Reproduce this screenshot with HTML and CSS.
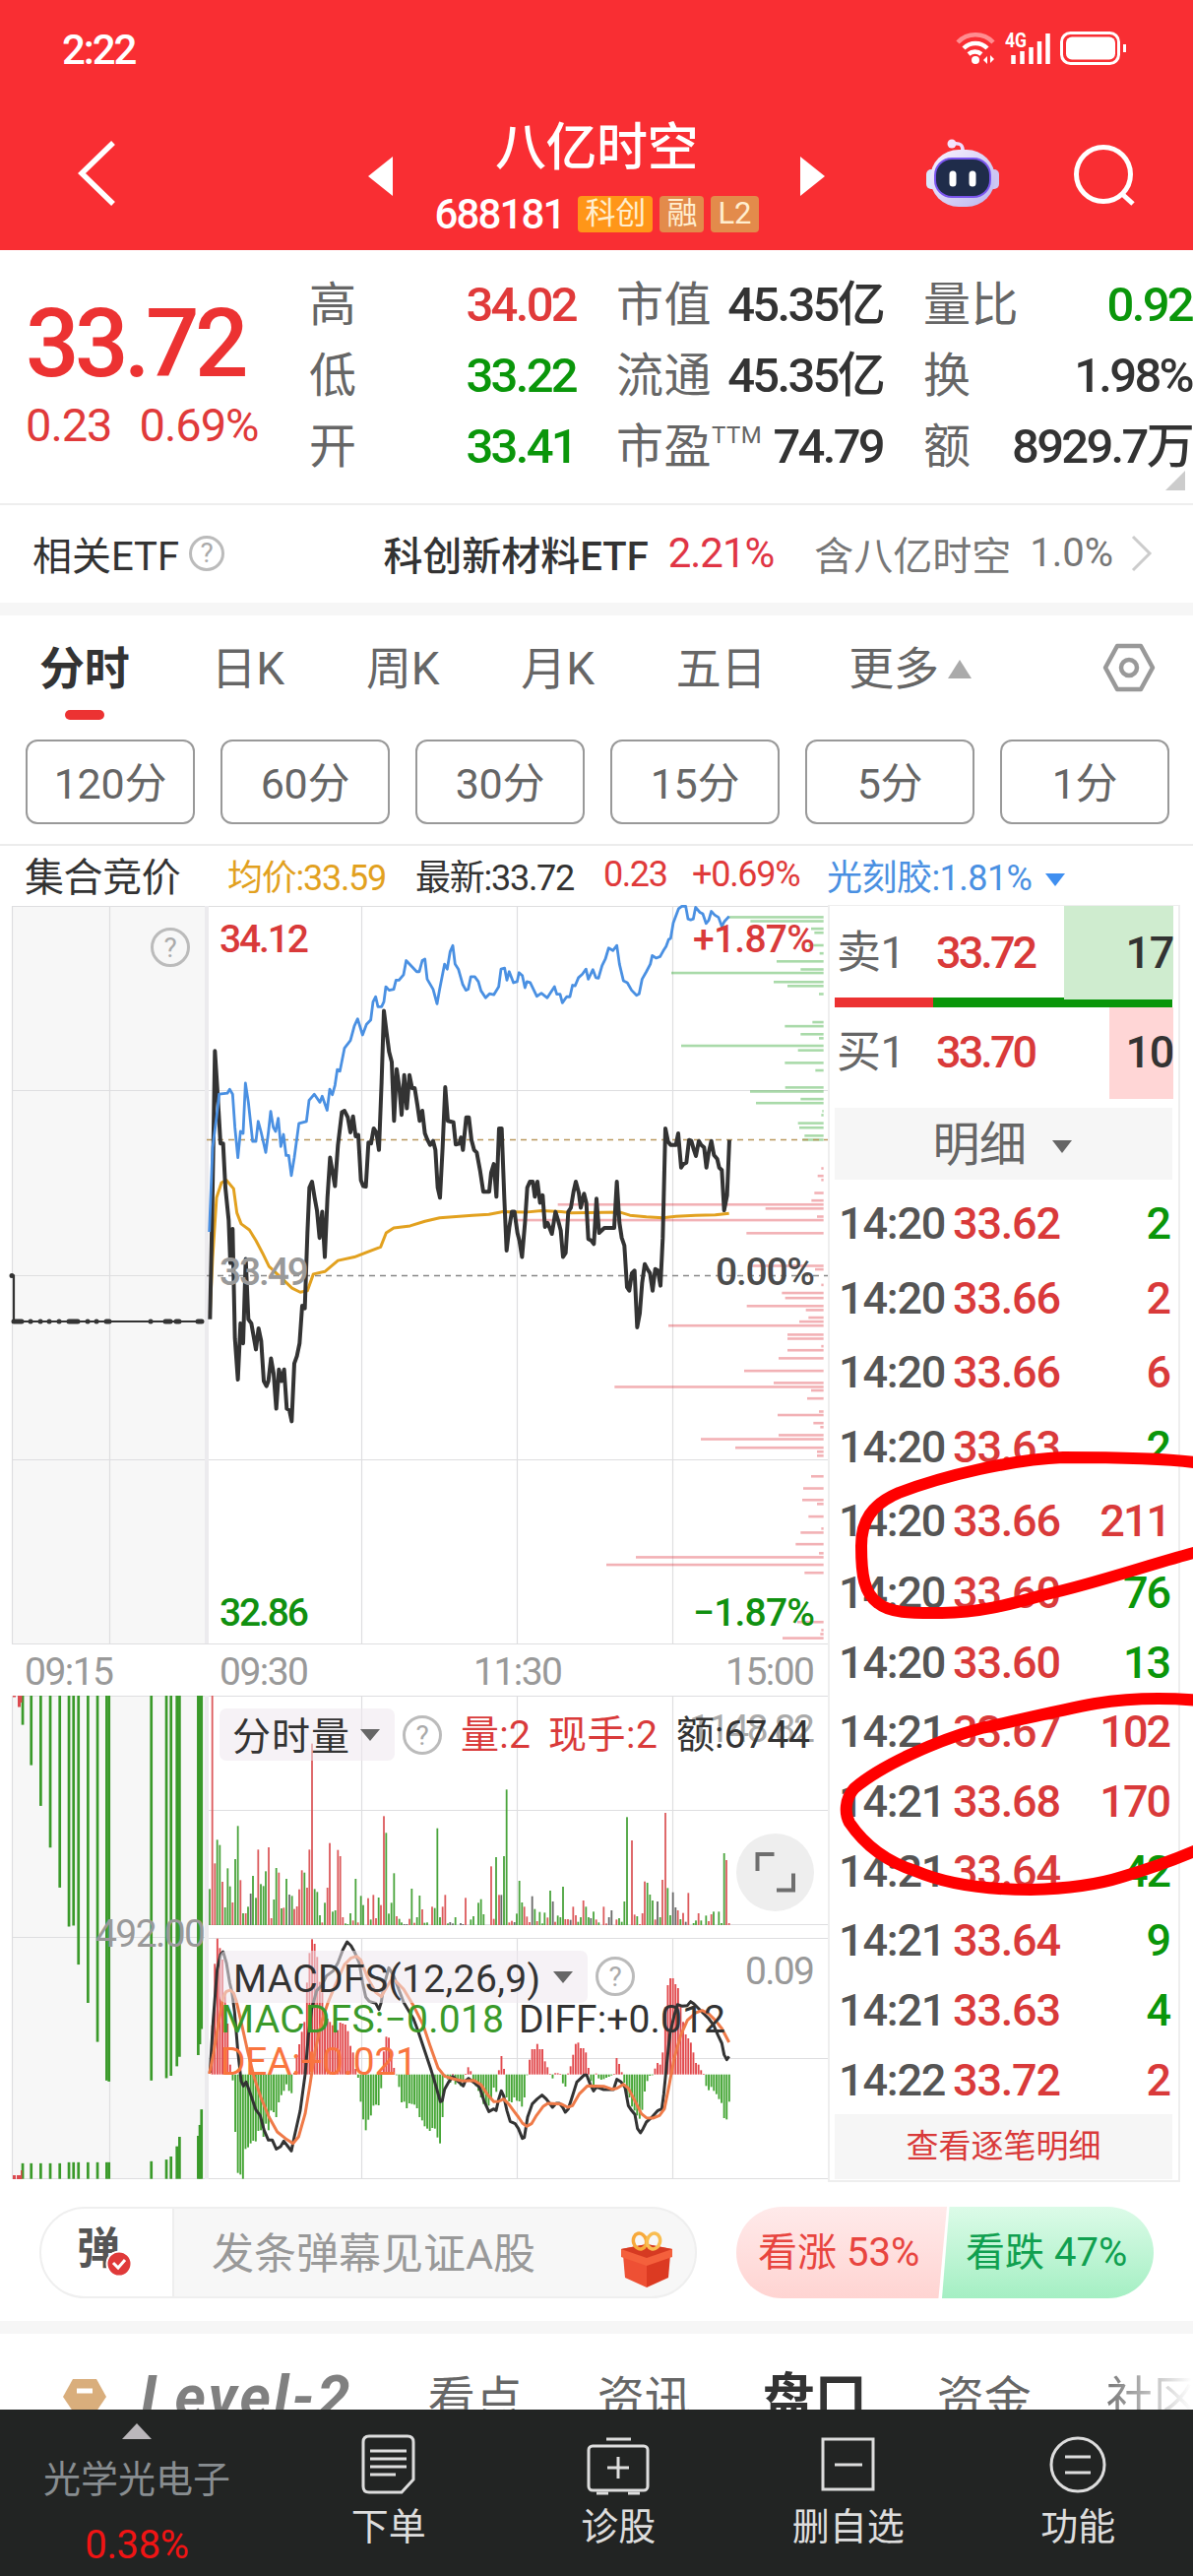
FILE: index.html
```html
<!DOCTYPE html>
<html lang="zh-CN">
<head>
    <meta charset="UTF-8">
    <meta name="viewport" content="width=device-width, initial-scale=1.0">
    <title>八亿时空 688181</title>
    <link rel="stylesheet" href="styles.css">
</head>
<body>
<div class="screen">
    <header class="header">
        <div class="status">
            <span>2:22</span>
            <svg width="180" height="40" viewBox="968 30 180 40" fill="none" stroke="#fff" stroke-width="4.5">
                <path d="M973 43a25 25 0 0 1 36 0" stroke="#ff8d90"/>
                <path d="M979 49a17 17 0 0 1 24 0"/>
                <path d="M984 55a10 10 0 0 1 13 0"/>
                <circle cx="991" cy="61" r="4" fill="#fff" stroke="none"/>
                <path d="M1003 57v8l-4-4zM1006 64v-8l4 4z" fill="#fff" stroke="none"/>
                <text x="1021" y="48" class="net" textLength="22" lengthAdjust="spacingAndGlyphs">4G</text>
                <path d="M1029.500 65v-9M1038.500 65v-13M1047.500 65v-17M1056 65v-23M1064.500 65v-31"/>
                <rect x="1078.500" y="33.500" width="58" height="31" rx="9" stroke-width="3"/>
                <rect x="1083" y="37.500" width="50" height="23" rx="6" fill="#fff" stroke="none"/>
                <path d="M1142.500 45v8" stroke-width="3"/>
            </svg>
        </div>
        <div class="titlebar">
            <svg class="back" width="42" height="72" viewBox="0 0 42 72"><path d="M37 5L5 36L37 67" fill="none" stroke="#fff" stroke-width="5.500"/></svg>
            <svg class="prev" width="26" height="40" viewBox="0 0 26 40"><path d="M25 0v40L0 20z" fill="#fff"/></svg>
            <div class="stock">
                <h1>八亿时空</h1>
                <div class="code"><span>688181</span><b class="tag hot">科创</b><b class="tag">融</b><b class="tag">L2</b></div>
            </div>
            <svg class="next" width="26" height="40" viewBox="0 0 26 40"><path d="M1 0v40L26 20z" fill="#fff"/></svg>
            <svg class="robot" width="76" height="72" viewBox="0 0 76 72">
                <defs>
                    <linearGradient id="shell" x1="0" y1="0" x2="1" y2="1"><stop offset="0" stop-color="#fbf4ff"/><stop offset="1" stop-color="#b9b4ee"/></linearGradient>
                </defs>
                <path d="M38 14Q39 4 28 6" fill="none" stroke="#f0dcff" stroke-width="3.500"/>
                <circle cx="27" cy="6" r="4.500" fill="#f4e4ff"/>
                <rect x="1" y="32" width="12" height="20" rx="5" fill="#d9e8fb"/>
                <rect x="63" y="32" width="12" height="20" rx="5" fill="#cdc6f2"/>
                <rect x="5" y="12" width="66" height="58" rx="29" fill="url(#shell)"/>
                <rect x="9" y="20" width="58" height="41" rx="18" fill="#7a55ee"/>
                <rect x="11" y="22" width="54" height="37" rx="16" fill="#1f2c4a"/>
                <path d="M28 37v9M48 37v9" stroke="#fff" stroke-width="7" stroke-linecap="round"/>
            </svg>
            <svg class="search" width="68" height="68" viewBox="0 0 68 68" fill="none" stroke="#fff" stroke-width="5"><circle cx="32" cy="31" r="27.500"/><path d="M51 51l11 10"/></svg>
        </div>
    </header>

    <section class="quote">
        <div class="price red">
            <div class="last">33.72</div>
            <div class="chg"><span>0.23</span><span>0.69%</span></div>
        </div>
        <dl>
            <dt>高</dt><dd class="red">34.02</dd>
            <dt>低</dt><dd class="green">33.22</dd>
            <dt>开</dt><dd class="green">33.41</dd>
        </dl>
        <dl>
            <dt>市值</dt><dd>45.35亿</dd>
            <dt>流通</dt><dd>45.35亿</dd>
            <dt>市盈<sup>TTM</sup></dt><dd>74.79</dd>
        </dl>
        <dl class="wide">
            <dt>量比</dt><dd class="green">0.92</dd>
            <dt>换</dt><dd>1.98%</dd>
            <dt>额</dt><dd>8929.7万</dd>
        </dl>
        <i class="corner"></i>
    </section>

    <section class="etf">
        <span>相关ETF</span>
        <svg class="help" width="36" height="36" viewBox="0 0 36 36"><circle cx="18" cy="18" r="16.500"/><text x="18" y="27">?</text></svg>
        <span class="etf-name">科创新材料ETF</span>
        <span class="etf-pct">2.21%</span>
        <span class="muted etf-in">含八亿时空</span>
        <span class="muted etf-w">1.0%</span>
        <svg width="24" height="38" viewBox="0 0 24 38"><path d="M3 2L20 19L3 36" fill="none" stroke="#ccc" stroke-width="3"/></svg>
    </section>

    <nav class="tabs">
        <span class="on">分时</span><span>日K</span><span>周K</span><span>月K</span><span>五日</span>
        <span>更多<i class="up"></i></span>
        <svg width="54" height="50" viewBox="0 0 54 50" fill="none" stroke="#999" stroke-width="4.500"><path d="M15 3h24l12 22l-12 22h-24l-12-22z" stroke-linejoin="round"/><circle cx="27" cy="25" r="8"/></svg>
    </nav>

    <div class="periods">
        <button>120分</button><button>60分</button><button>30分</button><button>15分</button><button>5分</button><button>1分</button>
    </div>

    <div class="info">
        <span class="call">集合竞价</span>
        <span class="avg">均价:33.59</span>
        <span class="new">最新:33.72</span>
        <span class="red d1">0.23</span>
        <span class="red d2">+0.69%</span>
        <span class="board">光刻胶:1.81%<i class="down"></i></span>
    </div>

    <main class="market">
        <svg class="chart" width="842" height="1297" viewBox="0 919 842 1297">
            <!-- call auction background and grid -->
            <path d="M12 920h198v749h-198zM12 1722h198v491h-198z" fill="#f7f7f7"/>
            <path class="grid" d="M12 920.500H842M12 1107.500H842M12 1482.500H842M12 1669.500H842M12 1295.500H210M12.500 920V1669M111.500 920V1669M367.500 920V1669M525.500 920V1669M683.500 920V1669M12 1722.500H842M12 1967.500H210M12 2212.500H842M12.500 1722V2213M111.500 1722V2213M210 1838.500H842M210 1954.500H842M210 1968.500H842M210 2090.500H842M367.500 1722V1955M525.500 1722V1955M683.500 1722V1955M367.500 1968V2213M525.500 1968V2213M683.500 1968V2213"/>
            <path d="M210 920V1669M210 1722V2213" stroke="#ecebee" stroke-width="4"/>
            <g id="levels" opacity=".36"></g>
            <path d="M210 1157.500H842" stroke="#b9975c" stroke-width="1.300" stroke-dasharray="6 5"/>
            <path d="M210 1295.500H842" stroke="#888" stroke-width="1.300" stroke-dasharray="6 5"/>

            <!-- auction price -->
            <path d="M12 1295.500h2V1342H206" fill="none" stroke="#333" stroke-width="2.200"/>
            <path d="M12 1295.500h.1M14 1342h8M31 1342h.1M41 1342h.1M50 1342h.1M60 1342h.1M70 1342h9M89 1342h.1M98 1342h.1M108 1342h3M153 1342h.1M168 1342h5M179 1342h3M201 1342h4" stroke="#333" stroke-width="5" stroke-linecap="round"/>

            <g transform="translate(0 900) scale(.33333 .5102)" fill="none" stroke-linejoin="round">
                <polyline class="line" stroke="#e2a11f" stroke-width="3" points="640,850 648,740 660,620 675,590 690,585 712,602 722,650 735,672 760,684 780,705 800,730 820,757 850,775 890,800 915,808 937,805 955,772 990,767 1030,745 1080,738 1160,718 1177,690 1200,680 1250,676 1295,667 1340,660 1380,658 1440,655 1490,653 1530,648 1600,649 1650,646 1710,648 1740,650 1890,649 1920,655 1970,658 2020,660 2060,657 2120,655 2180,654 2222,651"/>
                <polyline class="line" stroke="#333" stroke-width="4" points="640,862 647,640 655,328 662,400 672,512 680,512 687,600 697,665 702,750 709,682 716,900 725,982 733,870 741,910 749,742 757,862 766,870 780,922 788,880 796,905 804,985 812,995 818,985 826,940 834,970 842,1040 850,962 858,985 866,962 874,1040 882,1043 889,1065 897,950 905,935 913,910 921,835 929,840 937,690 943,600 951,588 959,620 966,645 974,700 982,648 990,738 998,620 1006,540 1014,570 1021,597 1030,515 1042,450 1050,447 1060,460 1068,490 1076,458 1084,498 1092,495 1100,585 1107,597 1115,598 1123,510 1131,512 1139,482 1147,490 1155,525 1163,390 1170,248 1178,290 1186,330 1194,350 1201,467 1209,364 1217,400 1224,455 1232,376 1240,442 1248,376 1256,402 1264,402 1272,435 1279,467 1287,447 1295,492 1303,505 1311,515 1320,507 1327,525 1334,600 1341,620 1349,520 1357,400 1365,467 1382,470 1389,514 1400,512 1405,500 1411,525 1421,460 1429,460 1437,505 1445,525 1453,530 1463,565 1473,608 1491,608 1497,570 1505,553 1513,618 1521,482 1529,482 1537,620 1544,725 1552,680 1560,648 1568,648 1577,690 1583,705 1591,738 1600,670 1607,600 1615,588 1624,588 1630,618 1638,588 1646,630 1654,615 1661,678 1669,670 1682,692 1693,648 1701,665 1709,685 1716,738 1724,730 1732,648 1740,640 1748,608 1755,588 1764,610 1770,640 1780,612 1787,630 1793,702 1802,705 1810,712 1818,622 1826,690 1842,680 1872,680 1880,588 1888,670 1895,700 1903,715 1911,798 1918,805 1926,770 1934,765 1942,878 1950,850 1957,790 1965,752 1973,762 1981,770 1989,805 1997,762 2005,765 2013,795 2020,700 2028,482 2036,508 2044,515 2060,515 2067,492 2076,560 2083,553 2092,550 2100,505 2107,507 2115,525 2121,537 2130,507 2137,515 2146,520 2153,560 2160,530 2168,507 2176,535 2186,543 2192,560 2200,565 2207,645 2216,615 2223,505"/>
                <polyline class="line" stroke="#4a90e2" stroke-width="2.800" points="638,688 648,520 660,460 668,414 693,412 700,404 709,414 716,480 725,540 733,488 741,492 748,392 757,430 770,508 780,508 787,468 796,490 810,530 818,490 825,448 833,480 840,488 848,462 856,518 864,494 872,536 880,536 888,576 897,540 911,472 934,468 942,426 958,414 975,430 982,418 997,446 1005,404 1013,415 1021,396 1028,365 1036,368 1050,322 1068,307 1080,278 1090,264 1105,296 1117,275 1130,266 1137,230 1145,220 1152,240 1163,240 1170,230 1176,200 1186,207 1200,205 1207,187 1216,187 1230,176 1238,148 1270,170 1278,170 1287,148 1295,145 1302,185 1320,205 1332,234 1340,205 1355,155 1363,165 1372,130 1380,118 1387,155 1397,165 1410,195 1420,207 1427,205 1435,180 1447,180 1458,190 1466,208 1480,222 1492,214 1505,216 1520,200 1527,165 1538,163 1545,187 1552,170 1565,192 1576,190 1582,172 1592,178 1600,202 1606,190 1616,192 1636,219 1650,213 1668,222 1690,200 1697,215 1707,215 1714,232 1727,220 1737,220 1745,197 1753,198 1763,182 1775,175 1786,165 1793,185 1807,166 1816,182 1824,183 1835,158 1845,145 1855,123 1868,128 1880,118 1888,155 1900,188 1912,192 1925,207 1940,217 1948,214 1957,185 1970,170 1982,155 1988,138 2000,143 2012,140 2022,128 2030,120 2038,106 2044,104 2052,73 2068,45 2078,40 2090,40 2097,65 2105,67 2113,65 2120,42 2133,52 2142,55 2152,74 2160,68 2168,50 2178,57 2190,62 2200,80 2208,70 2222,60"/>
            </g>

            <g class="help"><circle cx="173" cy="962" r="18.500"/><text x="173" y="972">?</text></g>
            <g class="num">
                <text x="223" y="967" textLength="91" fill="#d93a3a">34.12</text>
                <text x="704" y="967" textLength="124" fill="#d93a3a">+1.87%</text>
                <text x="223" y="1305" textLength="91" fill="#999">33.49</text>
                <text x="727" y="1305" textLength="101" fill="#4c4c4c">0.00%</text>
                <text x="223" y="1651" textLength="91" fill="#109010">32.86</text>
                <text x="704" y="1651" textLength="124" fill="#109010">−1.87%</text>
            </g>
            <g class="num axis">
                <text x="25" y="1711" textLength="91">09:15</text>
                <text x="223" y="1711" textLength="91">09:30</text>
                <text x="481" y="1711" textLength="91">11:30</text>
                <text x="737" y="1711" textLength="91">15:00</text>
            </g>

            <g id="auction"></g>
            <g id="volume"></g>
            <g id="macd"></g>
            <g transform="translate(200 1700) scale(.33333)" fill="none" stroke-linejoin="round">
                <polyline class="line" stroke="#333" stroke-width="3" points="40,1215 50,1050 62,900 72,855 80,846 90,880 100,940 107,970 115,1030 125,1150 135,1240 142,1255 150,1243 160,1270 180,1328 193,1345 205,1390 218,1420 230,1420 242,1447 255,1440 265,1423 278,1440 288,1453 297,1410 315,1330 330,1220 340,1100 350,1020 365,965 380,950 395,920 415,905 430,880 445,840 458,816 470,828 482,850 495,880 505,940 515,985 525,997 545,1003 555,1022 562,1000 570,950 585,895 600,920 615,960 630,1000 645,1025 660,1050 675,1090 695,1150 715,1210 730,1260 742,1303 748,1300 755,1265 768,1242 780,1226 795,1240 812,1255 818,1240 828,1232 845,1245 862,1260 875,1300 890,1333 905,1325 912,1330 920,1295 928,1270 935,1285 945,1330 955,1363 970,1370 980,1385 992,1415 998,1412 1008,1350 1022,1310 1037,1295 1052,1283 1065,1295 1075,1308 1084,1320 1095,1308 1105,1308 1115,1320 1123,1335 1132,1325 1145,1285 1158,1243 1170,1232 1180,1222 1188,1222 1200,1253 1209,1270 1218,1258 1240,1266 1270,1266 1280,1235 1292,1242 1305,1260 1315,1315 1325,1330 1335,1342 1343,1385 1352,1398 1360,1385 1370,1365 1385,1352 1405,1330 1417,1325 1423,1280 1433,1180 1442,1095 1455,1040 1465,1007 1480,1012 1495,1010 1505,998 1515,1005 1530,1020 1545,1035 1560,1050 1575,1070 1588,1100 1600,1125 1607,1160 1615,1175 1622,1165"/>
                <polyline class="line" stroke="#ef7a48" stroke-width="3" points="38,1218 50,1160 65,1070 80,985 90,967 102,963 112,972 120,995 135,1060 155,1150 175,1230 195,1290 220,1350 245,1395 270,1415 293,1430 310,1410 330,1340 345,1250 360,1150 380,1060 400,1000 425,940 450,885 470,865 487,860 500,872 520,925 545,970 562,983 575,960 590,935 605,935 630,960 660,1010 690,1070 710,1130 735,1200 755,1225 780,1233 810,1240 845,1238 865,1250 885,1280 905,1303 920,1302 935,1295 950,1310 965,1330 980,1350 992,1368 1005,1378 1020,1370 1035,1345 1055,1318 1070,1308 1110,1310 1130,1320 1145,1315 1165,1280 1190,1255 1240,1256 1265,1265 1280,1262 1300,1250 1315,1262 1335,1300 1355,1340 1370,1352 1390,1353 1410,1345 1425,1325 1440,1250 1455,1170 1475,1100 1495,1055 1520,1032 1540,1025 1560,1035 1580,1055 1600,1080 1622,1122"/>
            </g>

            <!-- indicator pickers -->
            <rect class="pick" x="223" y="1735" width="178" height="53" rx="7"/>
            <rect class="pick" x="223" y="1981" width="374" height="53" rx="7"/>
            <path d="M366 1756h20l-10 12zM562 2002h20l-10 12z" fill="#666"/>
            <g class="help"><circle cx="429" cy="1762" r="18.500"/><text x="429" y="1772">?</text><circle cx="625" cy="2007" r="18.500"/><text x="625" y="2017">?</text></g>
            <g class="num mid">
                <text x="97" y="1977" textLength="112" fill="#999">492.00</text>
                <text x="700" y="1769" textLength="128" fill="#aaa">1148.82</text>
                <text x="757" y="2015" textLength="71" fill="#999">0.09</text>
                <text x="236" y="1777" textLength="119" fill="#333">分时量</text>
                <text x="468" y="1775" textLength="71" fill="#d93a3a">量:2</text>
                <text x="557" y="1775" textLength="111" fill="#d93a3a">现手:2</text>
                <text x="687" y="1775" textLength="136" fill="#333">额:6744</text>
                <text x="237" y="2023" textLength="312" fill="#333">MACDFS(12,26,9)</text>
                <text x="224" y="2064" textLength="288" fill="#3a9a2a">MACDFS:−0.018</text>
                <text x="527" y="2064" textLength="210" fill="#333">DIFF:+0.012</text>
                <text x="224" y="2107" textLength="200" fill="#f9743e">DEA:+0.021</text>
            </g>
            <circle cx="787.500" cy="1901.500" r="39.500" fill="#eee"/>
            <path d="M769.500 1900v-17h17M789 1919.500h17v-17" fill="none" stroke="#6e6e6e" stroke-width="4"/>
        </svg>

        <aside class="book">
            <div class="level sell"><span>卖1</span><b>33.72</b><em>17</em></div>
            <div class="ratio"><i></i></div>
            <div class="level buy"><span>买1</span><b>33.70</b><em>10</em></div>
            <div class="detail">明细<i class="down"></i></div>
            <ul class="ticks early">
                <li><span>14:20</span><b>33.62</b><em class="green">2</em></li>
                <li><span>14:20</span><b>33.66</b><em>2</em></li>
                <li><span>14:20</span><b>33.66</b><em>6</em></li>
                <li><span>14:20</span><b>33.63</b><em class="green">2</em></li>
                <li><span>14:20</span><b>33.66</b><em>211</em></li>
            </ul>
            <ul class="ticks">
                <li><span>14:20</span><b>33.60</b><em class="green">76</em></li>
                <li><span>14:20</span><b>33.60</b><em class="green">13</em></li>
                <li><span>14:21</span><b>33.67</b><em>102</em></li>
                <li><span>14:21</span><b>33.68</b><em>170</em></li>
                <li><span>14:21</span><b>33.64</b><em class="green">42</em></li>
                <li><span>14:21</span><b>33.64</b><em class="green">9</em></li>
                <li><span>14:21</span><b>33.63</b><em class="green">4</em></li>
                <li><span>14:22</span><b>33.72</b><em>2</em></li>
            </ul>
            <div class="more">查看逐笔明细</div>
        </aside>

        <!-- hand-drawn marks over the trade list -->
        <svg class="marks" width="372" height="480" viewBox="840 1460 372 480">
            <path d="M1220 1486C1190 1481 1130 1480 1080 1480C1030 1482 960 1498 913 1516C885 1528 875 1545 875 1570C875 1600 878 1618 892 1628C905 1639 930 1638 957 1638C997 1638 1030 1628 1063 1619C1110 1609 1170 1588 1220 1575"/>
            <path d="M1220 1727C1185 1724 1150 1724 1113 1730C1070 1738 1035 1747 997 1755C950 1768 895 1793 868 1816C858 1827 858 1842 863 1851C880 1876 905 1892 930 1900C965 1915 1005 1919 1047 1919C1085 1918 1115 1914 1140 1906C1170 1897 1195 1888 1220 1877"/>
        </svg>
    </main>

    <section class="barrage">
        <div class="say">
            <div class="dan">弹
                <svg width="28" height="28" viewBox="0 0 28 28"><circle cx="14" cy="14" r="12.500" fill="#e03a3a" stroke="#fff" stroke-width="2"/><path d="M8 13l5 5l7-8" fill="none" stroke="#fff" stroke-width="3"/></svg>
            </div>
            <div class="hint">发条弹幕见证A股</div>
            <svg class="gift" width="54" height="58" viewBox="0 0 54 58">
                <path d="M3 24l24 9v24L5 47z" fill="#ee5034"/>
                <path d="M27 33v24l22-10l2-23z" fill="#dc3a22"/>
                <path d="M1 18l26-5l26 5v8l-26 9L1 26z" fill="#f4603c"/>
                <path d="M1 18l26-5l26 5l-26 9z" fill="#d63a22"/>
                <ellipse cx="20" cy="10" rx="6.500" ry="8" fill="none" stroke="#f7a93b" stroke-width="3.500" transform="rotate(-15 20 10)"/>
                <ellipse cx="34" cy="10" rx="6.500" ry="8" fill="none" stroke="#f9bd50" stroke-width="3.500" transform="rotate(15 34 10)"/>
            </svg>
        </div>
        <div class="vote">
            <div class="bull">看涨 53%</div>
            <div class="bear">看跌 47%</div>
        </div>
    </section>

    <nav class="subtabs">
        <svg width="46" height="50" viewBox="0 0 46 50"><path d="M11 0h24l10 18l-19 28h-6L1 18z" fill="#d9ae7c"/><path d="M15 12h16" stroke="#fff" stroke-width="5"/></svg>
        <span class="lv2">Level-2</span>
        <span>看点</span><span>资讯</span><span class="on">盘口</span><span>资金</span><span class="fade">社区</span>
    </nav>

    <footer class="bottom">
        <div class="index"><i class="up"></i><span>光学光电子</span><b>0.38%</b></div>
        <div class="act"><svg width="64" height="64" viewBox="0 0 64 64"><path d="M12 3h39q6 0 6 6v38L45 60H12q-6 0-6-6V9q0-6 6-6z"/><path d="M13 18h37M13 26h37M13 34h37M13 42h26"/></svg>下单</div>
        <div class="act"><svg width="64" height="64" viewBox="0 0 64 64"><rect x="2" y="13" width="60" height="45" rx="4"/><path d="M20 6h25M32 24v22M21 35h22M10 61h12M42 61h12"/></svg>诊股</div>
        <div class="act"><svg width="64" height="64" viewBox="0 0 64 64"><rect x="6" y="6" width="51" height="51"/><path d="M18 32h28"/></svg>删自选</div>
        <div class="act"><svg width="64" height="64" viewBox="0 0 64 64"><circle cx="32" cy="32" r="27"/><path d="M19 24h26M19 40h26"/></svg>功能</div>
    </footer>
</div>
<script src="script.js"></script>
</body>
</html>
```

FILE: styles.css
```css
* { box-sizing: border-box; margin: 0; padding: 0; }
body {
    width: 1212px;
    height: 2616px;
    overflow: hidden;
    background: #fff;
    color: #333;
    font-family: Roboto, "Noto Sans CJK SC", sans-serif;
    letter-spacing: -0.025em;
}
.screen { width: 1212px; height: 2616px; display: flex; flex-direction: column; overflow: hidden; }
.screen > * { flex-shrink: 0; }
svg { display: block; flex-shrink: 0; letter-spacing: 0; }
i, em { font-style: normal; }
.red { color: #e03a3a; }
.green { color: #0a960a; }
.muted { color: #777; }
.up { display: inline-block; border: 12px solid transparent; border-top: 0; border-bottom: 19px solid #aaa; }
.down { display: inline-block; border: 10px solid transparent; border-bottom: 0; border-top: 13px solid #666; }

/* header */
.header { height: 254px; background: #f92e33; color: #fff; }
.status { height: 100px; padding: 0 64px 0 63px; display: flex; align-items: center; justify-content: space-between; font-size: 42px; font-weight: 500; letter-spacing: -0.05em; }
.net { fill: #fff; stroke: none; font-size: 21px; font-weight: 700; }
.titlebar { height: 154px; display: flex; align-items: flex-start; }
.back { margin: 40px 0 0 78px; }
.prev { margin: 59px 0 0 254px; }
.next { margin-top: 59px; }
.stock { width: 412px; padding-top: 15px; text-align: center; }
.stock h1 { font-size: 52px; font-weight: 500; line-height: 72px; letter-spacing: -0.01em; }
.code { display: flex; justify-content: center; align-items: center; height: 60px; font-size: 42px; font-weight: 500; gap: 7px; letter-spacing: -0.045em; }
.code span { margin-right: 7px; }
.tag { height: 37px; padding: 0 7px; line-height: 36px; border-radius: 4px; font-size: 31px; font-weight: 400; background: #e38b4b; color: #ffeecf; letter-spacing: 0; }
.tag.hot { background: #ff9618; }
.robot { margin: 40px 0 0 102px; }
.search { margin: 46px 0 0 73px; }

/* quote */
.quote { position: relative; height: 259px; display: flex; border-bottom: 2px solid #eee; }
.price { width: 314px; padding: 43px 0 0 26px; }
.last { font-size: 96px; font-weight: 500; line-height: 104px; color: #ec3232; letter-spacing: -0.048em; }
.chg { display: flex; gap: 28px; font-size: 47px; line-height: 60px; padding-top: 1px; letter-spacing: -0.022em; }
.quote dl { width: 271px; margin-right: 41px; padding-top: 20px; display: grid; grid-template-columns: 60px 1fr; grid-auto-rows: 72px; align-items: center; white-space: nowrap; }
.quote dl.wide { width: 273px; margin: 0; }
.quote dt { font-size: 48px; line-height: 72px; color: #666; letter-spacing: 0.01em; }
.quote dd { font-size: 49px; line-height: 72px; font-weight: 500; text-align: right; letter-spacing: -0.055em; }
.quote sup { font-size: 24px; line-height: 0; position: relative; top: -3px; }
.corner { position: absolute; right: 8px; bottom: 13px; border: 10px solid #ccc; border-top-color: transparent; border-left-color: transparent; }

/* related ETF */
.etf { height: 112px; padding: 0 40px 2px 33px; display: flex; align-items: center; font-size: 40px; border-bottom: 13px solid #f6f6f6; white-space: nowrap; letter-spacing: 0; }
.help circle { fill: none; stroke: #bbb; stroke-width: 3; }
.help text { font-size: 28px; fill: #aaa; text-anchor: middle; }
.etf .help { margin-left: 10px; }
.etf-name { margin-left: auto; font-weight: 500; }
.etf-pct { margin-left: 20px; color: #e03545; font-size: 42px; letter-spacing: -0.025em; }
.etf-in { margin-left: 41px; letter-spacing: 0; }
.etf-w { margin: 0 17px 0 19px; letter-spacing: 0; }

/* tabs */
.tabs { height: 126px; display: flex; padding: 22px 38px 0 40px; font-size: 46px; color: #666; line-height: 64px; letter-spacing: -0.005em; }
.tabs span { margin-right: 83px; }
.tabs .on { color: #333; font-weight: 700; }
.tabs .on::after { content: ""; display: block; width: 40px; height: 10px; border-radius: 5px; background: #ec3232; margin: 10px 0 0 26px; }
.tabs .up { margin: 0 0 6px 9px; }
.tabs svg { margin: 6px 0 0 auto; }
.tabs span:nth-child(5) { margin-right: 84px; }
.tabs span:nth-child(6) { margin-right: 0; }
.periods { display: flex; gap: 26px; padding: 0 24px 20px 26px; border-bottom: 2px solid #ececec; }
.periods button { flex: 1; height: 86px; border: 2px solid #999; border-radius: 12px; background: #fff; font: inherit; font-size: 43px; color: #666; letter-spacing: -0.005em; padding-bottom: 4px; }

/* line under the period buttons */
.info { height: 60px; padding: 0 0 2px 25px; display: flex; align-items: center; font-size: 36px; white-space: nowrap; }
.call { width: 206px; font-size: 40px; letter-spacing: -0.01em; }
.avg { width: 191px; color: #e2a11f; letter-spacing: -0.035em; }
.new { width: 191px; letter-spacing: -0.035em; }
.d1 { width: 90px; letter-spacing: -0.04em; }
.d2 { width: 137px; letter-spacing: -0.035em; }
.board { color: #4a90e2; letter-spacing: -0.015em; }
.board .down { border-top-color: #3f8ff0; margin: 0 0 4px 14px; }

/* charts */
.market { position: relative; display: flex; height: 1297px; }
.grid { fill: none; stroke: #dedee0; stroke-width: 1.2; }
.line { vector-effect: non-scaling-stroke; }
.num { font-size: 39px; font-weight: 500; }
.mid { font-weight: 400; stroke-width: .4; }
.axis { fill: #999; font-weight: 400; }
.pick { fill: #eee7ee; fill-opacity: .55; }

/* order book */
.book { width: 358px; height: 1297px; padding: 0 6px 0 5px; margin-left: -1px; border: 2px solid #eee; border-top-width: 1px; letter-spacing: -0.075em; }
.book b, .book em { font-weight: 500; }
.level { height: 93px; display: grid; grid-template-columns: 99px 134px 111px; line-height: 95px; font-size: 45px; margin-right: -3px; }
.level span { padding-left: 2px; color: #666; font-size: 45px; letter-spacing: -0.01em; }
.level b { padding-left: 4px; color: #d93a3a; letter-spacing: -0.065em; }
.level em { text-align: right; letter-spacing: -0.03em; }
.sell em { background: #cfeccf; }
.buy em { background: #ffd6d6; margin-left: 46px; }
.buy { height: 102px; line-height: 91px; }
.buy em { height: 93px; }
.ratio { height: 10px; background: #0a960a; }
.ratio i { display: block; width: 100px; height: 10px; background: #ec3232; }
.detail { height: 73px; background: #f6f6f6; text-align: center; font-size: 48px; line-height: 75px; color: #666; letter-spacing: -0.01em; padding-right: 3px; }
.detail .down { margin: 0 0 8px 26px; }
.ticks { list-style: none; }
.early { padding-top: 6px; }
.ticks li { display: grid; grid-template-columns: 115px 110px 1fr; height: 70.7px; line-height: 72px; font-size: 45px; padding: 0 3px 0 4px; }
.early li { height: 75.6px; line-height: 77px; }
.ticks span { color: #555; font-weight: 500; }
.ticks b, .ticks em { color: #d93a3a; }
.ticks b { padding-left: 1px; }
.ticks em { text-align: right; letter-spacing: -0.045em; }
.ticks em.green { color: #0a960a; }
.more { height: 66px; background: #f6f6f6; text-align: center; line-height: 65px; font-size: 33px; color: #d93a3a; letter-spacing: 0; }
.marks { position: absolute; left: 840px; top: 541px; fill: none; stroke: #f00; stroke-width: 12; }

/* comment and vote */
.barrage { height: 154px; padding: 25px 40px 0; display: flex; justify-content: space-between; border-bottom: 13px solid #f6f6f6; }
.say { width: 668px; height: 93px; border: 2px solid #efefef; border-radius: 47px; background: #f7f7f7; display: flex; align-items: center; overflow: hidden; }
.dan { position: relative; width: 135px; height: 93px; background: #fff; border-right: 2px solid #eee; padding-left: 36px; font-size: 44px; font-weight: 700; line-height: 86px; color: #555; }
.dan svg { position: absolute; left: 65px; top: 44px; }
.hint { flex: 1; padding: 0 0 5px 38px; font-size: 43px; color: #999; letter-spacing: 0; }
.gift { margin: 14px 22px 0 0; }
.vote { width: 424px; height: 93px; display: flex; font-size: 40px; line-height: 93px; border-radius: 47px; overflow: hidden; font-weight: 400; letter-spacing: 0; }
.bull { width: 216px; padding-left: 22px; color: #e8453f; background: linear-gradient(#ffeaea, #ffd4d2); clip-path: polygon(0 0, 100% 0, 96% 100%, 0 100%); }
.bear { width: 217px; margin-left: -5px; padding-left: 24px; color: #10a050; background: linear-gradient(#dcfbe8, #a4efc3); clip-path: polygon(3.500% 0, 100% 0, 100% 100%, 0 100%); }

/* lower tabs, cut by the bottom bar */
.subtabs { height: 77px; overflow: hidden; display: flex; padding: 29px 0 0 63px; font-size: 48px; line-height: 75px; color: #666; letter-spacing: 0; white-space: nowrap; }
.subtabs svg { margin: 17px 34px 0 0; }
.subtabs span { margin-right: 76px; }
.subtabs .lv2 { width: 222px; font-size: 60px; line-height: 72px; font-style: italic; font-weight: 700; color: #808080; letter-spacing: 3px; }
.subtabs .on { font-size: 53px; font-weight: 700; color: #333; margin-right: 71px; margin-left: -4px; }
.subtabs .fade { background: linear-gradient(90deg, #777, #fff 90%); -webkit-background-clip: text; background-clip: text; color: transparent; margin: 0; }

/* bottom bar */
.bottom { height: 169px; background: #222423; display: flex; color: #ddd; font-size: 38px; letter-spacing: 0; }
.index { width: 278px; display: flex; flex-direction: column; align-items: center; padding-top: 14px; color: #888d90; }
.index .up { border-width: 0 15px 16px; border-bottom-color: #bbb7bb; }
.index span { line-height: 50px; margin-top: 16px; }
.index b { color: #f01414; font-weight: 400; font-size: 40px; line-height: 50px; margin-top: 17px; letter-spacing: -0.01em; }
.act { width: 233.5px; display: flex; flex-direction: column; align-items: center; padding-top: 24px; line-height: 50px; }
.act svg { fill: none; stroke: #ddd; stroke-width: 3; margin-bottom: 6px; }
```

FILE: script.js
```javascript
var NS = "http://www.w3.org/2000/svg";
var RED = "#dc4a50", GREEN = "#3a9a2a";

function bar(parent, x, y, w, h, color) {
    var r = document.createElementNS(NS, "rect");
    r.setAttribute("x", x.toFixed(2));
    r.setAttribute("y", y.toFixed(2));
    r.setAttribute("width", w);
    r.setAttribute("height", Math.max(h, 0.7).toFixed(2));
    r.setAttribute("fill", color);
    parent.appendChild(r);
}

// volume by price: left end, level
var sellLevels = [[1018,61],[1087,69],[1272,84],[1282,92],[1264,117],[1298,133],[1167,149],[1240,165],[846,172],[1158,190],[1200,198],[1296,214],[1276,270],[1192,278],[1240,294],[1296,302],[876,317],[1232,326],[1192,351],[1285,366],[1193,400],[1086,408],[1240,423],[1104,431],[1306,447],[1303,455],[1232,471],[1236,480],[1252,496],[1246,504]];
var buyLevels = [[1303,561],[1292,576],[1303,584],[1282,610],[1273,625],[500,633],[1133,641],[1290,657],[376,664],[1075,690],[1085,755],[1284,762],[1303,793],[1183,809],[1193,819],[1076,835],[1256,843],[1264,858],[1236,866],[837,874],[1200,892],[1200,900],[1303,915],[1200,923],[1173,939],[1068,964],[1158,988],[673,996],[1272,1003],[1260,1019],[1296,1045],[1170,1052],[1279,1068],[1300,1076],[1173,1092],[936,1100],[1041,1117],[1290,1125],[1290,1133],[1272,1174],[1248,1198],[1245,1221],[1290,1229],[1264,1254],[1303,1278],[1240,1286],[1225,1309],[1296,1327],[738,1335],[648,1350],[1252,1366],[1230,1464],[1303,1480],[1300,1488],[1185,1496]];
var levels = document.getElementById("levels");
function drawLevels(list, color) {
    list.forEach(function (p) {
        bar(levels, 400 + p[0] / 3, 899 + p[1] / 1.96, (1310 - p[0]) / 3, 2.6, color);
    });
}
drawLevels(sellLevels, "#159a15");
drawLevels(buyLevels, "#dd2a34");

// call auction: x, matched end, unmatched start
var auction = document.getElementById("auction");
[[69,208,1501],[95,327,1501],[124,447,1501],[153,570,1501],[182,688,1501],[210,803,1498],[224,800,1498],[239,915,1498],[268,1028,1498],[297,1143,1498],[325,1257,1498],[332,1260,1498],[461,1257,1495],[507,1250,1490],[521,1243,1481],[539,1215,1451],[547,1187,1423],[604,1182,1420],[609,1150,1388],[614,1105,1342]].forEach(function (p) {
    var x = p[0] / 3 - 1.3;
    bar(auction, x, 1722, 2.7, (p[1] - 122) / 2.904, GREEN);
    bar(auction, x, 1680 + p[2] / 2.904, 2.7, (1547 - p[2]) / 2.904, GREEN);
});
bar(auction, 13, 1722, 3, 1.5, RED);
bar(auction, 18, 1722, 3, 11.5, RED);
bar(auction, 20.5, 1722, 2, 7, RED);
bar(auction, 13, 2209, 3, 4, RED);
bar(auction, 17, 2209, 4, 4, RED);
bar(auction, 21, 2204, 1.5, 9, RED);

// minute volume: x, top, colour
var volume = document.getElementById("volume");
var colors = { r: "#dc5a5c", g: "#4aa43c", k: "#6a6a6a" };
("39,655g 47,66r 55,577r 62,505g 70,521g 78,633r 86,711g 94,592g 101,647g 109,696r 117,564g 125,463g 133,628r 141,729g 149,729r 156,709g 164,669k 171,615g 180,682g 187,535r 195,640g 203,646g 210,601g 219,528r 227,744r 235,687g 242,591g 250,605r 258,714g 265,712r 273,624g 282,672k 290,676g 297,716r 305,708r 312,656r 320,598r 328,605g 336,651r 343,535r 351,212r 359,655g 367,664g 375,735g 382,757r 390,697g 398,651r 405,515r 414,724g 422,720g 430,536r 437,555r 445,741r 453,760g 460,762g 468,729g 476,751r 484,624g 491,757r 500,676g 507,704g 522,683r 530,748g 538,673r 546,744r 554,681g 561,704r 570,433r 577,484g 585,730g 593,697g 601,607g 609,738r 617,746g 624,757g 632,762k 640,762k 648,746r 655,654g 663,758r 671,741g 679,675g 687,717r 694,758g 702,757g 717,709r 725,713g 733,470g 741,741g 749,709r 757,673r 765,760g 772,756k 780,760k 788,741g 804,759k 811,762k 819,682r 835,748g 843,738g 858,697g 866,686g 874,732g 897,586r 905,746r 912,558g 921,673r 928,673k 936,555g 944,352g " +
"952,757r 960,752r 968,756k 975,730g 983,630g 991,696g 998,709r 1006,739r 1014,756r 1022,677k 1030,716g 1037,753r 1045,725g 1053,760g 1060,727g 1069,742r 1077,660g 1085,693k 1092,755r 1100,736g 1108,741g 1116,648g 1123,747r 1131,747r 1139,749k 1147,709r 1155,735r 1162,755g 1170,741g 1178,690r 1186,709g 1194,741g 1201,744k 1209,724g 1217,748r 1225,757g 1240,709r 1248,760r 1256,741k 1264,720k 1279,748r 1287,744g 1295,755g 1303,693g 1311,436g 1326,507r 1334,733r 1342,738g 1350,762r 1358,729r 1365,632r 1373,636g 1381,672g 1389,690g 1397,748r 1404,693k 1412,741g 1419,627r 1428,423r 1435,652g 1443,735g 1451,665k 1459,711k 1466,720r 1474,747g 1482,728r 1490,755k 1498,667r 1514,759g 1521,751g 1529,729r 1537,751g 1552,736g 1560,753r 1568,732r 1575,724g 1591,724g 1599,759g 1607,546g 1614,567r 1622,759r").split(" ").forEach(function (s) {
    var p = s.slice(0, -1).split(",");
    bar(volume, 200 + p[0] / 3 - 0.9, 1700 + p[1] / 3, 1.8, (765 - p[1]) / 3, colors[s.slice(-1)]);
});

// MACD histogram, zero line at 1220
var macd = document.getElementById("macd");
[1070,883,806,835,870,968,1065,1190,1238,1395,1520,1525,1538,1447,1442,1430,1422,1424,1392,1390,1410,1370,1390,1330,1335,1350,1305,1283,1270,1250,1270,1277,
1215,1170,1128,1090,1060,940,850,808,822,862,938,970,1020,1050,1060,1070,1085,1085,1062,1065,1068,1088,1133,1153,1203,
1230,1303,1357,1390,1358,1345,1315,1312,1314,1262,1150,1105,1108,1150,1200,1222,1258,1305,1303,1323,1308,1310,1312,1323,1350,1360,1378,1385,1392,1383,1385,1412,1430,1350,
1230,1235,1245,1218,1250,1245,1255,1240,1218,1198,1210,1240,1255,1270,1290,1310,1318,1315,1290,1260,1273,1207,1164,1203,
1290,1302,1305,1290,1300,1302,1318,1290,1222,1175,1143,1143,1127,1143,1143,1180,1198,1218,1232,1216,1216,1218,1247,1257,1217,1195,1160,1127,1123,1140,1140,1153,1200,
1240,1252,1217,1232,1236,1234,1230,1227,1223,1219,1170,1188,1213,1245,1280,1290,1318,1330,1345,1355,1328,1272,1240,1224,1222,1202,1185,1190,1153,1015,948,927,927,945,957,1010,1060,1098,1110,1123,1153,1185,1190,1207,1218,
1255,1268,1258,1270,1280,1295,1307,1353,1357,1303].forEach(function (v, i) {
    var x = 200 + (46.8 + 7.8 * i) / 3 - 0.9;
    bar(macd, x, 1700 + Math.min(v, 1220) / 3, 1.9, Math.abs(v - 1220) / 3, v < 1220 ? "#e24a4e" : "#46a636");
});
```
